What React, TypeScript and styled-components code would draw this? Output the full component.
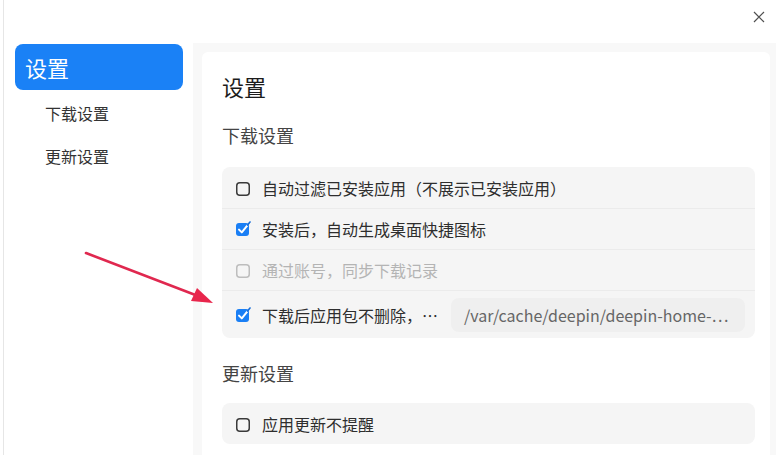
import { FC } from 'react';
import styled, { createGlobalStyle } from 'styled-components';

const GlobalStyle = createGlobalStyle`
  html, body {
    margin: 0;
    padding: 0;
    background: #ffffff;
  }
  body {
    font-family: "Noto Sans CJK SC", "Noto Sans", "DejaVu Sans", sans-serif;
    color: #333333;
  }
`;

const StyledWindow = styled.div`
  position: relative;
  width: 777px;
  height: 455px;
  margin-left: 3px;
  border-left: 1px solid #e6e6e6;
  display: flex;
  flex-direction: column;
  overflow: hidden;
  background: #ffffff;
`;

const StyledTitleBar = styled.div`
  height: 43px;
  flex: none;
  display: flex;
  justify-content: flex-end;
  align-items: flex-start;
`;

const StyledCloseButton = styled.button`
  width: 36px;
  height: 34px;
  margin-right: 4px;
  padding: 0;
  border: none;
  background: transparent;
  display: flex;
  align-items: center;
  justify-content: center;
  cursor: pointer;
`;

const StyledBody = styled.div`
  flex: 1;
  display: flex;
  flex-direction: row;
  min-height: 0;
`;

const StyledSidebar = styled.nav`
  width: 189px;
  flex: none;
  padding: 1px 10px 0 11px;
  box-sizing: border-box;
  display: flex;
  flex-direction: column;
  gap: 2px;
`;

interface NavItemProps {
  $active?: boolean;
}

const StyledNavItem = styled.div<NavItemProps>`
  display: flex;
  align-items: center;
  height: ${({ $active }) => ($active ? '46px' : '41px')};
  padding-left: ${({ $active }) => ($active ? '10px' : '30px')};
  border-radius: 8px;
  background: ${({ $active }) => ($active ? '#1a81f6' : 'transparent')};
  color: ${({ $active }) => ($active ? '#ffffff' : '#333333')};
  font-size: ${({ $active }) => ($active ? '22px' : '16px')};
  cursor: pointer;
`;

const StyledMain = styled.main`
  flex: none;
  width: 583px;
  background: #f8f8f8;
  padding: 9px 6px 0 9px;
  box-sizing: border-box;
  display: flex;
  min-width: 0;
`;

const StyledCard = styled.section`
  flex: 1;
  min-width: 0;
  overflow: hidden;
  background: #ffffff;
  border-radius: 6px 6px 0 0;
  padding: 18px 15px 0 20px;
  display: flex;
  flex-direction: column;
`;

const StyledHeading = styled.h1`
  margin: 0;
  font-size: 22px;
  font-weight: 400;
  line-height: 32px;
  color: #1c1c1c;
`;

interface OffsetProps {
  $top: number;
}

const StyledSubHeading = styled.h2<OffsetProps>`
  margin: ${({ $top }) => $top}px 0 0 0;
  font-size: 18px;
  font-weight: 400;
  line-height: 26px;
  color: #444444;
`;

const StyledGroup = styled.div<OffsetProps>`
  margin-top: ${({ $top }) => $top}px;
  background: #f5f5f5;
  border-radius: 8px;
  display: flex;
  flex-direction: column;
  min-width: 0;
`;

interface RowProps {
  $tall?: boolean;
}

const StyledRow = styled.div<RowProps>`
  height: ${({ $tall }) => ($tall ? '47px' : '40px')};
  display: flex;
  align-items: center;
  padding: 0 10px 0 13px;
  min-width: 0;
  & + & {
    border-top: 1px solid #ebebeb;
  }
  &:first-child {
    height: 41px;
  }
`;

interface LabelProps {
  $disabled?: boolean;
}

const StyledLabel = styled.label<LabelProps>`
  display: flex;
  align-items: center;
  gap: 11px;
  font-size: 16px;
  color: ${({ $disabled }) => ($disabled ? '#b4b4b4' : '#2e2e2e')};
  white-space: nowrap;
  flex: none;
  cursor: pointer;
`;

const StyledPathBox = styled.div`
  flex: 1;
  height: 34px;
  margin-left: 13px;
  border-radius: 8px;
  background: #efefef;
  padding: 0 14px 0 13px;
  display: flex;
  align-items: center;
  font-size: 16px;
  color: #666666;
  white-space: nowrap;
  overflow: hidden;
  min-width: 0;
`;

const StyledArrow = styled.svg`
  position: absolute;
  left: -4px;
  top: 0;
  pointer-events: none;
`;

interface CheckProps {
  checked?: boolean;
  disabled?: boolean;
}

const CheckBox: FC<CheckProps> = ({ checked, disabled }) => (
  <svg width="16" height="16" viewBox="0 0 16 16" style={{ flex: 'none' }}>
    {checked ? (
      <>
        <rect x="1" y="2" width="13" height="13" rx="3" fill="#1a7ff5" />
        <path d="M4 8.6 L6.8 11.4 L12.2 4.6" fill="none" stroke="#ffffff" strokeWidth="2" strokeLinecap="round" strokeLinejoin="round" />
        <path d="M12.6 4.1 L15 1" fill="none" stroke="#1a6fd8" strokeWidth="1.6" strokeLinecap="round" />
      </>
    ) : (
      <rect
        x="1.75"
        y="2.75"
        width="12.5"
        height="12.5"
        rx="3"
        fill="none"
        stroke={disabled ? '#bdbdbd' : '#3a3a3a'}
        strokeWidth="1.5"
      />
    )}
  </svg>
);

const App: FC = () => {
  return (
    <>
      <GlobalStyle />
      <StyledWindow>
        <StyledTitleBar>
          <StyledCloseButton aria-label="关闭">
            <svg width="12" height="12" viewBox="0 0 12 12">
              <path d="M1 1 L11 11 M11 1 L1 11" stroke="#505050" strokeWidth="1.2" />
            </svg>
          </StyledCloseButton>
        </StyledTitleBar>
        <StyledBody>
          <StyledSidebar>
            <StyledNavItem $active>设置</StyledNavItem>
            <StyledNavItem>下载设置</StyledNavItem>
            <StyledNavItem>更新设置</StyledNavItem>
          </StyledSidebar>
          <StyledMain>
            <StyledCard>
              <StyledHeading>设置</StyledHeading>
              <StyledSubHeading $top={20}>下载设置</StyledSubHeading>
              <StyledGroup $top={19}>
                <StyledRow>
                  <StyledLabel>
                    <CheckBox />
                    <span>自动过滤已安装应用（不展示已安装应用）</span>
                  </StyledLabel>
                </StyledRow>
                <StyledRow>
                  <StyledLabel>
                    <CheckBox checked />
                    <span>安装后，自动生成桌面快捷图标</span>
                  </StyledLabel>
                </StyledRow>
                <StyledRow>
                  <StyledLabel $disabled>
                    <CheckBox disabled />
                    <span>通过账号，同步下载记录</span>
                  </StyledLabel>
                </StyledRow>
                <StyledRow $tall>
                  <StyledLabel>
                    <CheckBox checked />
                    <span>下载后应用包不删除，⋯</span>
                  </StyledLabel>
                  <StyledPathBox>/var/cache/deepin/deepin-home-⋯</StyledPathBox>
                </StyledRow>
              </StyledGroup>
              <StyledSubHeading $top={22}>更新设置</StyledSubHeading>
              <StyledGroup $top={17}>
                <StyledRow>
                  <StyledLabel>
                    <CheckBox />
                    <span>应用更新不提醒</span>
                  </StyledLabel>
                </StyledRow>
              </StyledGroup>
            </StyledCard>
          </StyledMain>
        </StyledBody>
        <StyledArrow width="781" height="455" viewBox="0 0 781 455">
          <line x1="86" y1="253" x2="198" y2="296" stroke="#e0284f" strokeWidth="2.6" strokeLinecap="round" />
          <polygon points="213,303 191,301 197,288" fill="#e8264c" />
        </StyledArrow>
      </StyledWindow>
    </>
  );
};

export default App;
